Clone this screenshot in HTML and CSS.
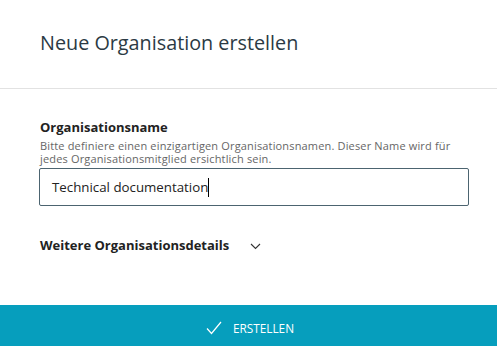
FILE: index.html
```html
<!DOCTYPE html>
<html lang="de">
<head>
  <meta charset="UTF-8">
  <title>Neue Organisation erstellen</title>
  <link rel="stylesheet" href="styles.css">
</head>
<body>
  <div class="dialog">
    <div class="header">
      <h2>Neue Organisation erstellen</h2>
    </div>
    <div class="content">
      <label class="label" for="orgName">Organisationsname</label>
      <p class="hint">Bitte definiere einen einzigartigen Organisationsnamen. Dieser Name wird für jedes Organisationsmitglied ersichtlich sein.</p>
      <div class="input">
        <span class="value">Technical documentation</span><span class="caret"></span>
      </div>
      <div class="more">
        <span>Weitere Organisationsdetails</span>
        <svg class="chevron" width="11" height="7" viewBox="0 0 11 7">
          <path d="M1 1 L5.5 5.5 L10 1" fill="none" stroke="#333" stroke-width="1.1"/>
        </svg>
      </div>
    </div>
    <div class="footer">
      <button class="create">
        <svg class="check" width="16" height="14" viewBox="0 0 16 14">
          <path d="M1 7.5 L5.5 12.5 L15 1" fill="none" stroke="#fff" stroke-width="1.2"/>
        </svg>
        ERSTELLEN
      </button>
    </div>
  </div>
</body>
</html>
```

FILE: styles.css
```css
* {
  margin: 0;
  padding: 0;
  box-sizing: border-box;
}

body {
  font-family: "Open Sans", sans-serif;
  background-color: #fff;
  color: #2b3a44;
}

.dialog {
  width: 497px;
  height: 346px;
  display: flex;
  flex-direction: column;
  overflow: hidden;
}

.header {
  height: 89px;
  padding: 29px 40px 0;
  border-bottom: 1px solid #e2e2e2;
}

.header h2 {
  font-size: 19.8px;
  font-weight: 400;
  line-height: 27px;
  color: #2b3a44;
}

.content {
  padding: 29px 28px 0 39px;
  height: 216px;
}

.label {
  display: block;
  font-size: 13px;
  font-weight: 700;
  line-height: 18px;
  color: #222;
  padding-left: 1px;
}

.hint {
  font-size: 11px;
  letter-spacing: 0.16px;
  line-height: 13px;
  color: #666;
  margin-top: 3px;
  padding-left: 1px;
}

.input {
  margin-top: 3px;
  height: 38px;
  border: 1px solid #4c6470;
  border-radius: 2px;
  display: flex;
  align-items: center;
  padding-left: 12px;
  font-size: 13.3px;
  color: #222;
}

.caret {
  display: inline-block;
  width: 1px;
  height: 19px;
  background-color: #000;
}

.more {
  margin-top: 30px;
  display: flex;
  align-items: center;
  gap: 21px;
  font-size: 13px;
  font-weight: 700;
  line-height: 18px;
  color: #222;
  padding-left: 1px;
}

.chevron {
  margin-top: 2px;
}

.footer {
  flex: 1;
  background-color: #069ebd;
  display: flex;
  justify-content: center;
  padding-top: 15px;
}

.create {
  border: none;
  background: none;
  color: #fff;
  font-family: "Open Sans", sans-serif;
  font-size: 11.8px;
  height: 16px;
  display: flex;
  align-items: center;
  gap: 11px;
  margin-left: 3px;
}
```
